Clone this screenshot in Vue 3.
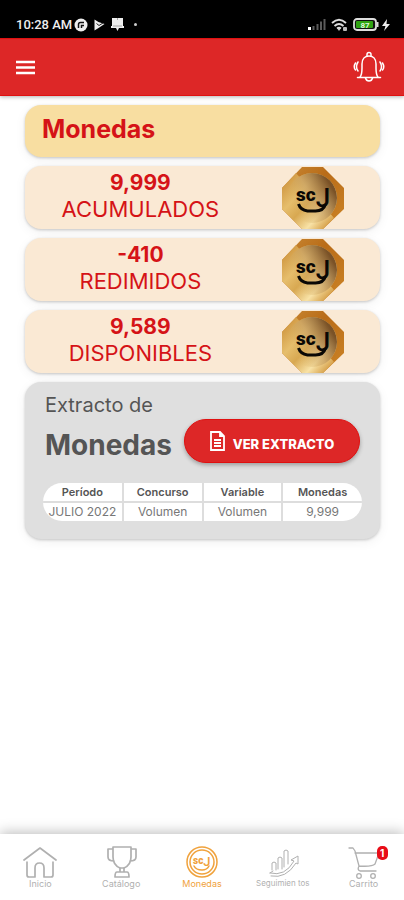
<template>
  <div class="app">
    <div class="status-bar">
      <div class="status-group">
        <span class="clock">10:28 AM</span>
        <svg class="status-icon" width="14" height="14" viewBox="0 0 14 14" aria-hidden="true">
          <circle cx="7" cy="7" r="6.5" fill="#eee" />
          <path d="M4.500 10V6.500a2 2 0 0 1 2-2h3.500M7.500 10V7.500h2.500" fill="none" stroke="#111" stroke-width="1.500" />
        </svg>
        <svg class="status-icon play" width="11" height="12" viewBox="0 0 11 12" aria-hidden="true">
          <path d="M0.500 0.500l4 2.500L10.500 5 4.500 9 0.500 11.500z" fill="#eee" />
          <path d="M2.500 4.500l2.500 2 4-2.500" fill="none" stroke="#222" />
        </svg>
        <svg class="status-icon book" width="13" height="13" viewBox="0 0 13 13" aria-hidden="true">
          <path d="M1 0h11v8h1v2H8l-1.500 3L5 10H0V8h1z" fill="#eee" />
          <path d="M6.500 0v2M2 8h9" stroke="#888" stroke-width=".7" />
        </svg>
        <span class="dot"></span>
      </div>
      <div class="status-group">
        <svg width="20" height="13" viewBox="0 0 20 13" aria-hidden="true">
          <path d="M1 12h3v-3H1z" fill="#fff" />
          <path d="M6.500 12V8M10.500 12V6M14 12V3.500M17.500 12V1" stroke="#5b5b5b" stroke-width="2" />
        </svg>
        <svg class="wifi" width="17" height="14" viewBox="0 0 17 14" aria-hidden="true">
          <path d="M1 5Q8 -1.500 15 5M3.500 8Q8 4 12.500 8M6 10.500Q8 9 10 10.500" fill="none" stroke="#ddd" stroke-width="1.900" />
          <path d="M6.500 10.500h3L8 13z" fill="#ddd" />
          <rect x="12" y="9" width="4" height="4" rx="1" fill="#bbb" />
        </svg>
        <svg class="battery" width="27" height="13" viewBox="0 0 27 13" aria-hidden="true">
          <rect x="1" y="1" width="22" height="11" rx="3" fill="#111" stroke="#ddd" stroke-width="1.800" />
          <rect x="3" y="3" width="17" height="7" rx="1" fill="#2fa312" />
          <path d="M24.500 4v5" stroke="#ddd" stroke-width="2" />
          <text x="12" y="9.500" text-anchor="middle" font-size="8" font-weight="700" fill="#dff5d8">87</text>
        </svg>
        <svg class="bolt" width="8" height="12" viewBox="0 0 8 12" aria-hidden="true">
          <path d="M5 0L0 7h3.500L2 12l6-7H4.500z" fill="#eee" />
        </svg>
      </div>
    </div>

    <header class="toolbar">
      <button type="button" class="icon-button" aria-label="Menú">
        <svg width="19" height="15" viewBox="0 0 19 15">
          <path d="M0 2h19M0 7.500h19M0 13h19" stroke="#fff" stroke-width="2.600" />
        </svg>
      </button>
      <button type="button" class="icon-button" aria-label="Notificaciones">
        <svg width="32" height="32" viewBox="0 0 32 32" fill="none" stroke="#fff" stroke-width="1.500" stroke-linecap="round" stroke-linejoin="round">
          <path d="M4.500 26.500h23M7 26c2-2 2-4 2-9v-4c0-5 3-8 7-8s7 3 7 8v4c0 5 0 7 2 9" />
          <path d="M14 5V3.500a2 2 0 0 1 4 0V5M12.500 27c1 4 6 4 7 0" />
          <path d="M5 11q-3 5 0 9M2.500 12q-2.500 4 0 7M27 11q3 5 0 9M29.500 12q2.500 4 0 7" />
        </svg>
      </button>
    </header>

    <main class="content">
      <section class="card title-card">
        <h1>Monedas</h1>
      </section>

      <section v-for="item in balances" :key="item.label" class="card balance-card">
        <div class="balance-text">
          <strong>{{ item.value }}</strong>
          <span>{{ item.label }}</span>
        </div>
        <svg class="coin" width="62" height="62" viewBox="0 0 62 62" role="img" aria-label="Moneda SCJ">
          <defs>
            <linearGradient id="coinEdge" x1="0" y1="0" x2="1" y2="1">
              <stop offset="0" stop-color="#c98a35" />
              <stop offset=".4" stop-color="#b96c18" />
              <stop offset="1" stop-color="#cc8426" />
            </linearGradient>
            <linearGradient id="coinGold" gradientUnits="userSpaceOnUse" x1="2" y1="14" x2="50" y2="58">
              <stop offset="0" stop-color="#cf9640" />
              <stop offset=".3" stop-color="#e6be6c" />
              <stop offset=".5" stop-color="#d8a851" />
              <stop offset=".75" stop-color="#f8e2a6" />
              <stop offset="1" stop-color="#cf9337" />
            </linearGradient>
            <linearGradient id="coinShade" x1=".15" y1=".75" x2=".9" y2=".3">
              <stop offset="0" stop-color="#dbb260" stop-opacity="0" />
              <stop offset=".5" stop-color="#c8a164" stop-opacity=".7" />
              <stop offset="1" stop-color="#7a5227" />
            </linearGradient>
          </defs>
          <path d="M20 0h21l21 21v21L41 62H20L0 42V21z" fill="url(#coinEdge)" />
          <path d="M14 6L0 21v21l20 20h21l11-11z" fill="url(#coinGold)" />
          <circle cx="30" cy="31" r="25" fill="url(#coinGold)" />
          <circle cx="30" cy="31" r="25" fill="url(#coinShade)" />
          <text class="coin-logo" x="14" y="34">sc<tspan class="coin-logo-j" dy="6">J</tspan></text>
          <path d="M16.500 37q2 6 9 7h8q8 0 10-7" fill="none" stroke="#0a0805" stroke-width="3" />
        </svg>
      </section>

      <section class="card extract-card">
        <h2 class="extract-kicker">Extracto de</h2>
        <div class="extract-head">
          <span class="extract-title">Monedas</span>
          <button type="button" class="extract-button">
            <svg width="15" height="20" viewBox="0 0 15 20" fill="none" stroke="#fff" stroke-width="1.800" aria-hidden="true">
              <path d="M1 1h9l4 4v14H1zM10 1v4h4M4 9h7M4 12h7M4 15h7" />
            </svg>
            <span>VER EXTRACTO</span>
          </button>
        </div>
        <div class="table-wrap">
          <table>
            <thead>
              <tr>
                <th v-for="column in columns" :key="column" scope="col">{{ column }}</th>
              </tr>
            </thead>
            <tbody>
              <tr v-for="(row, i) in rows" :key="i">
                <td v-for="(cell, j) in row" :key="j">{{ cell }}</td>
              </tr>
            </tbody>
          </table>
        </div>
      </section>
    </main>

    <nav class="tab-bar">
      <a
        v-for="tab in tabs"
        :key="tab.id"
        href="#"
        class="tab"
        :class="{ 'is-active': tab.id === active, 'is-long': tab.label.length > 10 }"
        @click.prevent="active = tab.id"
      >
        <span class="tab-icon">
          <svg width="34" height="34" viewBox="0 0 34 34" fill="none" stroke="currentColor" stroke-linecap="round" stroke-linejoin="round" aria-hidden="true">
            <template v-if="tab.id === 'inicio'">
              <path d="M1 15L17 3l16 12" stroke-width="1.700" />
              <path d="M4 17v13q0 2 2 2h6V23q0-5 4.500-5t4.500 5v9h7q2 0 2-2V17" stroke-width="1.700" />
            </template>
            <template v-else-if="tab.id === 'catalogo'">
              <path d="M9 2h18v10q0 8-7 11h-4q-7-3-7-11zM9 4H4v8q0 4 6 4M27 4h5v8q0 4-6 4" stroke-width="1.700" />
              <path d="M16 23v4M20 23v4M13 27h10q2 0 2 5H11q0-5 2-5z" stroke-width="1.700" />
            </template>
            <template v-else-if="tab.id === 'monedas'">
              <circle cx="17" cy="17" r="15" stroke-width="1.500" />
              <circle cx="17" cy="17" r="12" stroke-width="1.500" />
              <text class="tab-logo" x="8" y="19">sc<tspan class="tab-logo-j" dy="2">J</tspan></text>
              <path d="M9 21q2 4 8 4 5 0 7-4" stroke-width="1.500" />
            </template>
            <template v-else-if="tab.id === 'seguimientos'">
              <path d="M6 25v-7q2-2 4 0v7M12 24V13q2-2 4 0v11M18 22V6q2-2 4 0v13" />
              <path d="M4 28q15 4 24-12l-3-1 7-4v8l-2-1Q20 34 5 31M4 28l3-2" />
            </template>
            <template v-else>
              <path d="M2 3h4l2 3 4 15q13 1 16-2l4-11H8M12 21q-2 4 1 5h16" stroke-width="1.300" />
              <circle cx="12" cy="31" r="2.300" stroke-width="1.300" />
              <circle cx="26" cy="31" r="2.300" stroke-width="1.300" />
            </template>
          </svg>
          <span v-if="tab.badge" class="badge">{{ tab.badge }}</span>
        </span>
        <span class="tab-label">{{ tab.label }}</span>
      </a>
    </nav>
  </div>
</template>

<script setup>
import { ref } from 'vue'

const active = ref('monedas')

const balances = [
  { value: '9,999', label: 'ACUMULADOS' },
  { value: '-410', label: 'REDIMIDOS' },
  { value: '9,589', label: 'DISPONIBLES' },
]

const columns = ['Período', 'Concurso', 'Variable', 'Monedas']
const rows = [['JULIO 2022', 'Volumen', 'Volumen', '9,999']]

const tabs = [
  { id: 'inicio', label: 'Inicio' },
  { id: 'catalogo', label: 'Catálogo' },
  { id: 'monedas', label: 'Monedas' },
  { id: 'seguimientos', label: 'Seguimien tos' },
  { id: 'carrito', label: 'Carrito', badge: 1 },
]
</script>

<style>
body {
  margin: 0;
  background: #fff;
}
</style>

<style scoped>
.app {
  display: flex;
  flex-direction: column;
  min-height: 100vh;
  font-family: Inter, "Liberation Sans", sans-serif;
  background: #fff;
}

.app * {
  box-sizing: border-box;
}

.status-bar {
  display: flex;
  align-items: center;
  justify-content: space-between;
  height: 38px;
  padding: 11px 14px 0 16px;
  background: #000;
  color: #eee;
}

.status-group {
  display: flex;
  align-items: center;
}

.clock {
  font: 500 13px/16px Roboto, sans-serif;
}

.status-icon {
  margin-left: 2px;
}

.play,
.book {
  margin-left: 6px;
}

.dot {
  width: 3px;
  height: 3px;
  margin-left: 10px;
  border-radius: 50%;
  background: #ccc;
}

.wifi {
  margin-left: 4px;
}

.battery {
  margin-left: 5px;
  font-family: Roboto, sans-serif;
}

.bolt {
  margin-left: 2px;
}

.toolbar {
  display: flex;
  align-items: center;
  justify-content: space-between;
  height: 58px;
  padding: 0 19px 0 16px;
  background: #dd2727;
  border-top: 1px solid #e01010;
  border-bottom: 1px solid #e01010;
  box-shadow: 0 1px 4px rgba(0, 0, 0, 0.3);
}

.icon-button {
  display: flex;
  padding: 0;
  border: 0;
  background: none;
  cursor: pointer;
}

.content {
  display: flex;
  flex: 1;
  flex-direction: column;
  gap: 9px;
  padding: 9px 24px 24px 25px;
}

.card {
  border-radius: 16px;
  box-shadow: 0 1px 3px rgba(0, 0, 0, 0.2), 0 3px 12px rgba(0, 0, 0, 0.06);
}

.title-card {
  padding: 8px 17px 12px;
  background: #f8dea1;
}

h1 {
  margin: 0;
  color: #d51317;
  font-size: 25px;
  font-weight: 700;
  line-height: 32px;
}

.balance-card {
  display: flex;
  align-items: center;
  height: 63px;
  background: #fae9d4;
}

.balance-text {
  display: flex;
  flex: 0 0 65%;
  flex-direction: column;
  align-items: center;
  padding-bottom: 3px;
  color: #d51317;
  font-size: 22px;
  line-height: 27px;
}

.balance-text strong {
  font-size: 21px;
  font-weight: 700;
}

.coin {
  flex: none;
  margin-left: 26px;
}

.coin-logo {
  font: 900 19px Roboto, sans-serif;
  fill: #0a0805;
}

.coin-logo-j {
  font-size: 26px;
  font-weight: 500;
}

.extract-card {
  padding: 10px 18px 18px;
  background: #dfdfdf;
  color: #555;
}

.extract-kicker {
  margin: 0 2px;
  font-size: 20px;
  font-weight: 400;
  line-height: 27px;
}

.extract-head {
  display: flex;
  align-items: center;
  justify-content: space-between;
  padding: 0 2px;
}

.extract-title {
  padding-top: 8px;
  font-size: 28px;
  font-weight: 700;
  line-height: 36px;
}

.extract-button {
  display: flex;
  align-items: center;
  justify-content: center;
  gap: 8px;
  width: 176px;
  height: 44px;
  padding: 0;
  border: 1px solid #e01010;
  border-radius: 22px;
  background: #dd2727;
  box-shadow: 0 2px 4px rgba(0, 0, 0, 0.3);
  color: #fff;
  font: 800 13px/18px Inter, sans-serif;
  white-space: nowrap;
  cursor: pointer;
}

.extract-button span {
  padding-top: 6px;
}

.table-wrap {
  margin-top: 20px;
  overflow: hidden;
  border-radius: 20px;
}

table {
  width: 100%;
  border-collapse: collapse;
  table-layout: fixed;
  background: #fff;
}

th,
td {
  height: 19px;
  padding: 0;
  font-size: 12px;
  line-height: 16px;
  text-align: center;
  white-space: nowrap;
}

th {
  border-bottom: 2px solid #ddd;
  font-size: 11px;
  font-weight: 600;
}

td {
  color: #777;
}

th + th,
td + td {
  border-left: 2px solid #ddd;
}

.tab-bar {
  display: flex;
  height: 66px;
  padding-top: 11px;
  background: #fff;
  box-shadow: 0 -2px 12px rgba(0, 0, 0, 0.25);
}

.tab {
  display: flex;
  flex: 1;
  flex-direction: column;
  align-items: center;
  color: #b0b0b0;
  text-decoration: none;
}

.tab.is-active {
  color: #f0a23c;
}

.tab-icon {
  position: relative;
  display: flex;
}

.tab-logo {
  font: 900 10px Roboto, sans-serif;
  fill: currentColor;
  stroke: none;
}

.tab-logo-j {
  font-size: 13px;
  font-weight: 500;
}

.tab-label {
  font-size: 9px;
  line-height: 9px;
}

.is-long .tab-label {
  font-size: 8px;
}

.badge {
  position: absolute;
  top: 1px;
  right: -7px;
  width: 11px;
  height: 14px;
  border-radius: 5px;
  background: #e80c17;
  color: #fff;
  font-size: 10px;
  font-weight: 700;
  line-height: 14px;
  text-align: center;
}
</style>
